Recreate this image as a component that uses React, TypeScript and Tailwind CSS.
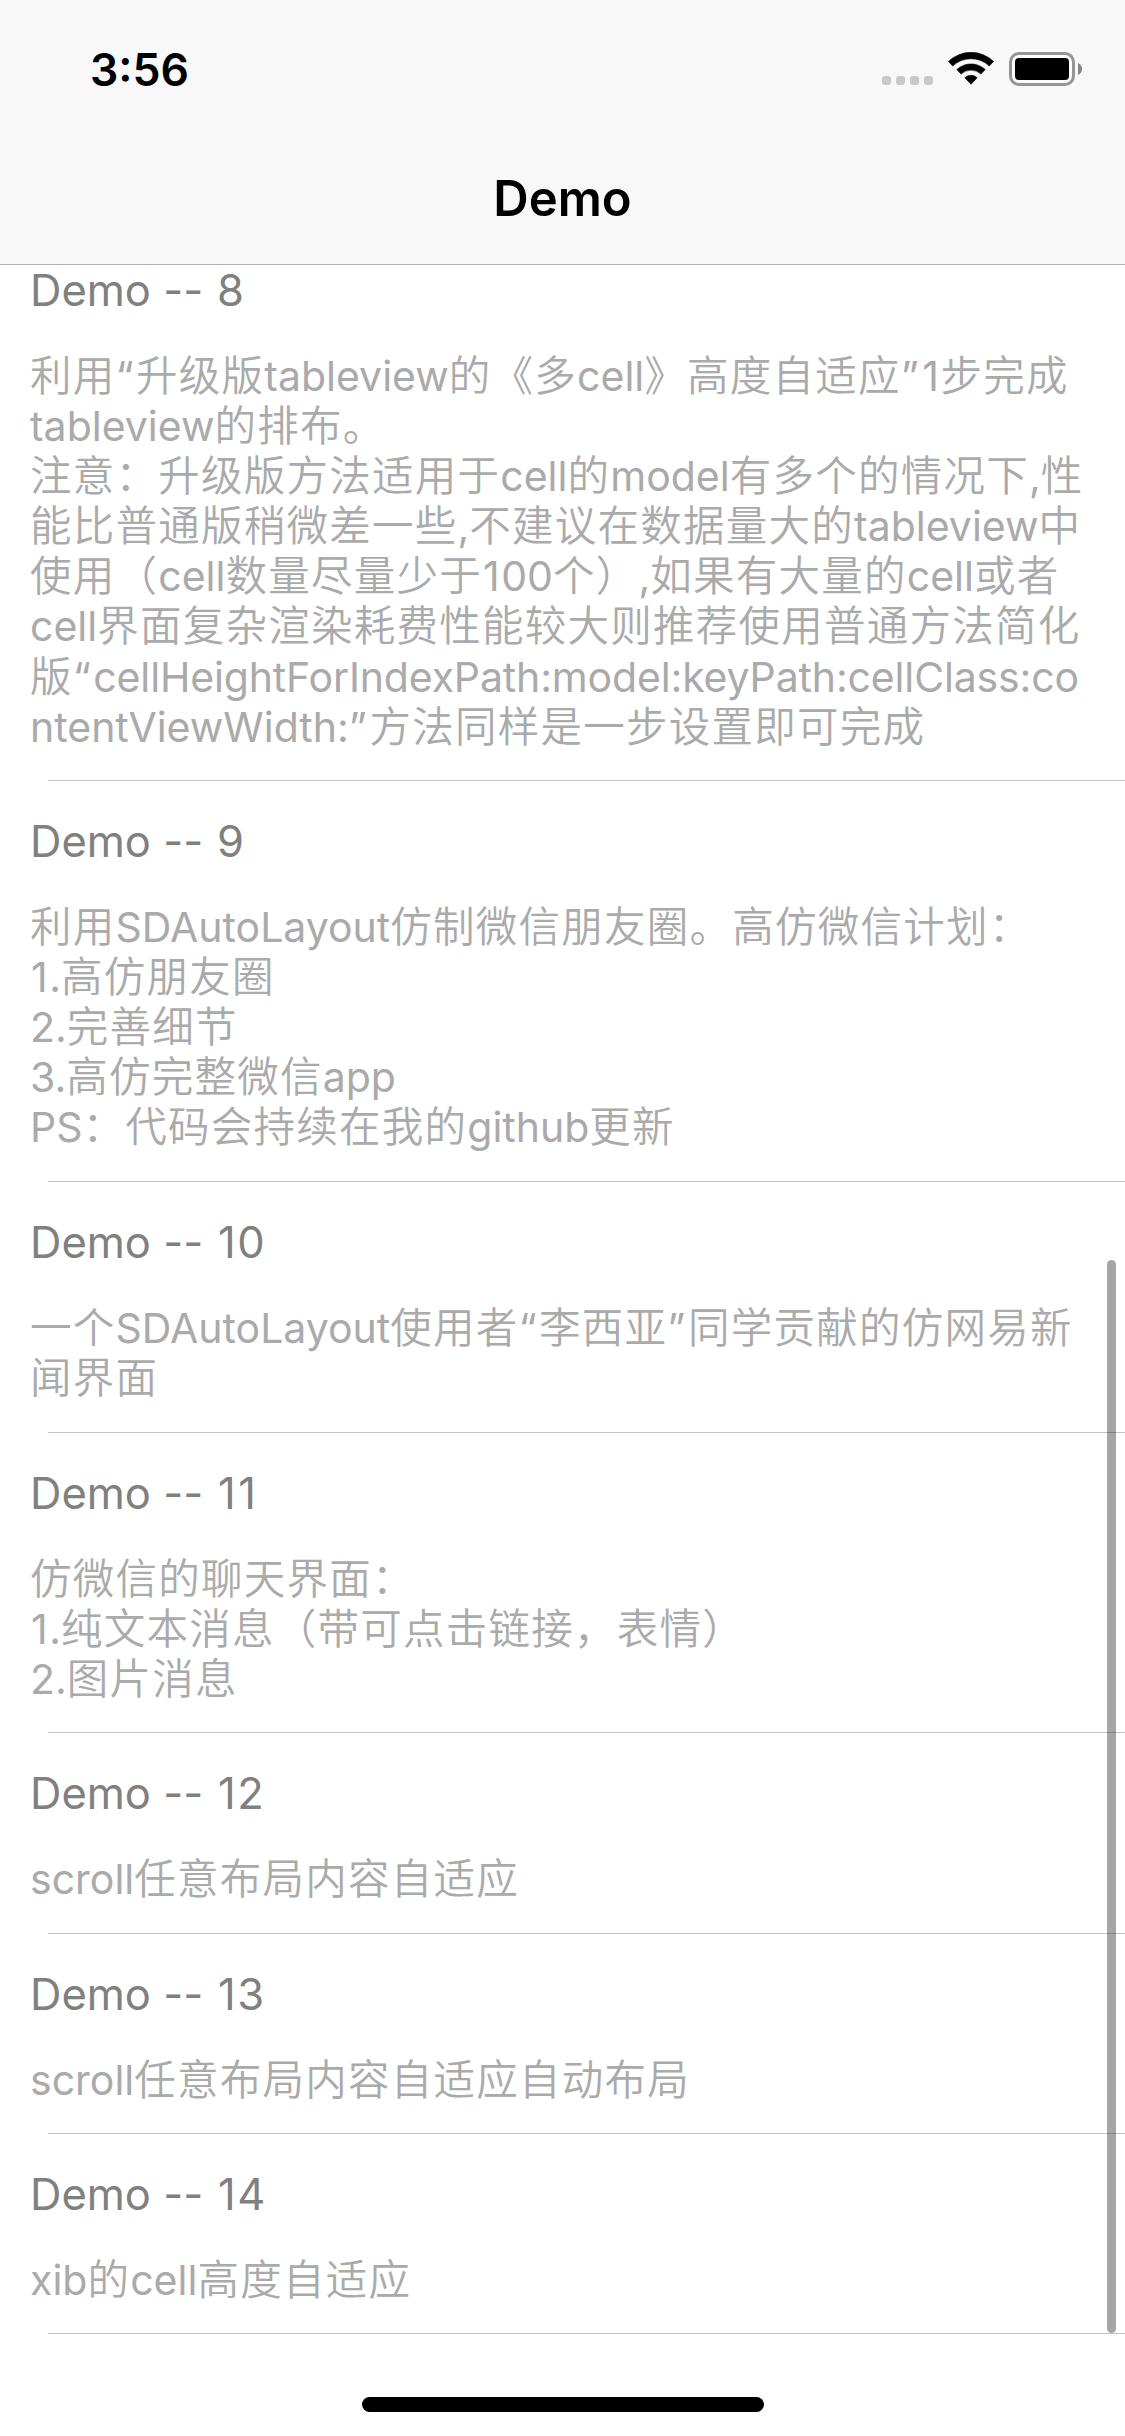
type Demo = { id: number; height: string; lines: string[] };

const demos: Demo[] = [
  {
    id: 8,
    height: "h-[551px]",
    lines: [
      "利用“升级版tableview的《多cell》高度自适应”1步完成",
      "tableview的排布。",
      "注意：升级版方法适用于cell的model有多个的情况下,性",
      "能比普通版稍微差一些,不建议在数据量大的tableview中",
      "使用（cell数量尽量少于100个）,如果有大量的cell或者",
      "cell界面复杂渲染耗费性能较大则推荐使用普通方法简化",
      "版“cellHeightForIndexPath:model:keyPath:cellClass:co",
      "ntentViewWidth:”方法同样是一步设置即可完成",
    ],
  },
  {
    id: 9,
    height: "h-[401px]",
    lines: [
      "利用SDAutoLayout仿制微信朋友圈。高仿微信计划：",
      "1.高仿朋友圈",
      "2.完善细节",
      "3.高仿完整微信app",
      "PS：代码会持续在我的github更新",
    ],
  },
  {
    id: 10,
    height: "h-[251px]",
    lines: ["一个SDAutoLayout使用者“李西亚”同学贡献的仿网易新", "闻界面"],
  },
  {
    id: 11,
    height: "h-[300px]",
    lines: ["仿微信的聊天界面：", "1.纯文本消息（带可点击链接，表情）", "2.图片消息"],
  },
  { id: 12, height: "h-[201px]", lines: ["scroll任意布局内容自适应"] },
  { id: 13, height: "h-[200px]", lines: ["scroll任意布局内容自适应自动布局"] },
  { id: 14, height: "h-[200px]", lines: ["xib的cell高度自适应"] },
];

const RUNS = /[\u3000-\u9fff\uff00-\uffef]+|[“”]|1|[^\u3000-\u9fff\uff00-\uffef“”1]+/g;

function runClass(run: string) {
  if (/^[\u3000-\u9fff\uff00-\uffef]/.test(run)) {
    return "inline-block font-['Noto_Sans_CJK_SC',sans-serif] text-[41.5px] leading-none font-[350] tracking-[1.25px]";
  }
  if (run === "“" || run === "”") return "tracking-[2.5px]";
  if (run === "1") return "pl-px tracking-[1.5px]";
  return run.length > 30 ? "tracking-[-0.15px]" : "tracking-normal";
}

/** One line of body copy; Han, Latin and quote runs carry their own tracking. */
function Line({ text }: { text: string }) {
  return (
    <div className="h-[50.1px] whitespace-nowrap text-[41px] leading-[50.1px] font-[380]">
      {(text.match(RUNS) ?? []).map((run, i) => (
        <span key={i} className={runClass(run)}>
          {run}
        </span>
      ))}
    </div>
  );
}

function Title({ id }: { id: number }) {
  return (
    <h2 className="h-[54px] whitespace-pre text-[43.5px] leading-[54px] font-[380] text-[#808080]">
      Demo --<span className="tracking-[1.5px]"> </span>
      {String(id)
        .split("")
        .map((digit, i) => (
          <span key={i} className={digit === "1" ? "pl-px tracking-[1.5px]" : ""}>
            {digit}
          </span>
        ))}
    </h2>
  );
}

function Row({ demo }: { demo: Demo }) {
  return (
    <li className={`${demo.height} flex flex-col`}>
      <div className="grow pt-[33px] pl-[30px]">
        <Title id={demo.id} />
        <div className="pt-[34px] text-[#aaaaaa]">
          {demo.lines.map((line) => (
            <Line key={line} text={line} />
          ))}
        </div>
      </div>
      <div className="ml-12 h-px bg-[#c4c4c6]" />
    </li>
  );
}

function StatusIcons() {
  return (
    <svg width="203" height="40" viewBox="0 0 203 40">
      <g fill="#c8c8c8">
        <rect x="0" y="24" width="9" height="9" rx="3" />
        <rect x="14" y="24" width="9" height="9" rx="3" />
        <rect x="28" y="24" width="9" height="9" rx="3" />
        <rect x="42" y="24" width="9" height="9" rx="3" />
      </g>
      <path d="M66.5 9.4a32.5 32.5 0 0 1 45 0L107.3 14.1a26.3 26.3 0 0 0 -36.6 0Z" strokeLinejoin="round" stroke="#000" strokeWidth=".6" />
      <path d="M74.8 17.6a20.6 20.6 0 0 1 28.4 0L98.9 22.1a14.3 14.3 0 0 0 -19.8 0Z" strokeLinejoin="round" stroke="#000" strokeWidth=".6" />
      <path d="M82.8 25.8a9 9 0 0 1 12.4 0L89 32.3Z" strokeLinejoin="round" stroke="#000" strokeWidth=".6" />
      <rect x="128.500" y="1.500" width="63" height="31" rx="8.500" fill="#fff" fillOpacity=".6" stroke="#959595" strokeWidth="3" />
      <rect x="133" y="6" width="54" height="22" rx="4" />
      <path d="M196 11c2.600 1 4 3.400 4 6s-1.400 5-4 6Z" fill="#858585" />
    </svg>
  );
}

export default function App() {
  return (
    <div className="relative flex h-[2436px] w-[1125px] flex-col overflow-hidden bg-white font-['Inter','Noto_Sans_CJK_SC',sans-serif]">
      <header className="relative z-10 flex h-[265px] shrink-0 flex-col border-b border-[#b2b2b2] bg-[#f8f8f8] text-black">
        <div className="flex h-[132px] justify-between pt-[42px] pl-[90px]">
          <time className="pt-px text-[44.5px] leading-[54px] font-semibold">3:56</time>
          <div className="mt-[10px] mr-[40px]">
            <StatusIcons />
          </div>
        </div>
        <h1 className="flex h-[132px] items-center justify-center pt-[2px] text-[49px] font-semibold">Demo</h1>
      </header>
      <ul className="-mt-[35px] flex flex-col">
        {demos.map((demo) => (
          <Row key={demo.id} demo={demo} />
        ))}
      </ul>
      <div className="absolute top-[1260px] right-[9px] h-[1073px] w-[9px] rounded-full bg-black/35" />
      <div className="mt-auto mb-[24px] flex justify-center">
        <div className="h-[15px] w-[402px] rounded-full bg-black" />
      </div>
    </div>
  );
}
